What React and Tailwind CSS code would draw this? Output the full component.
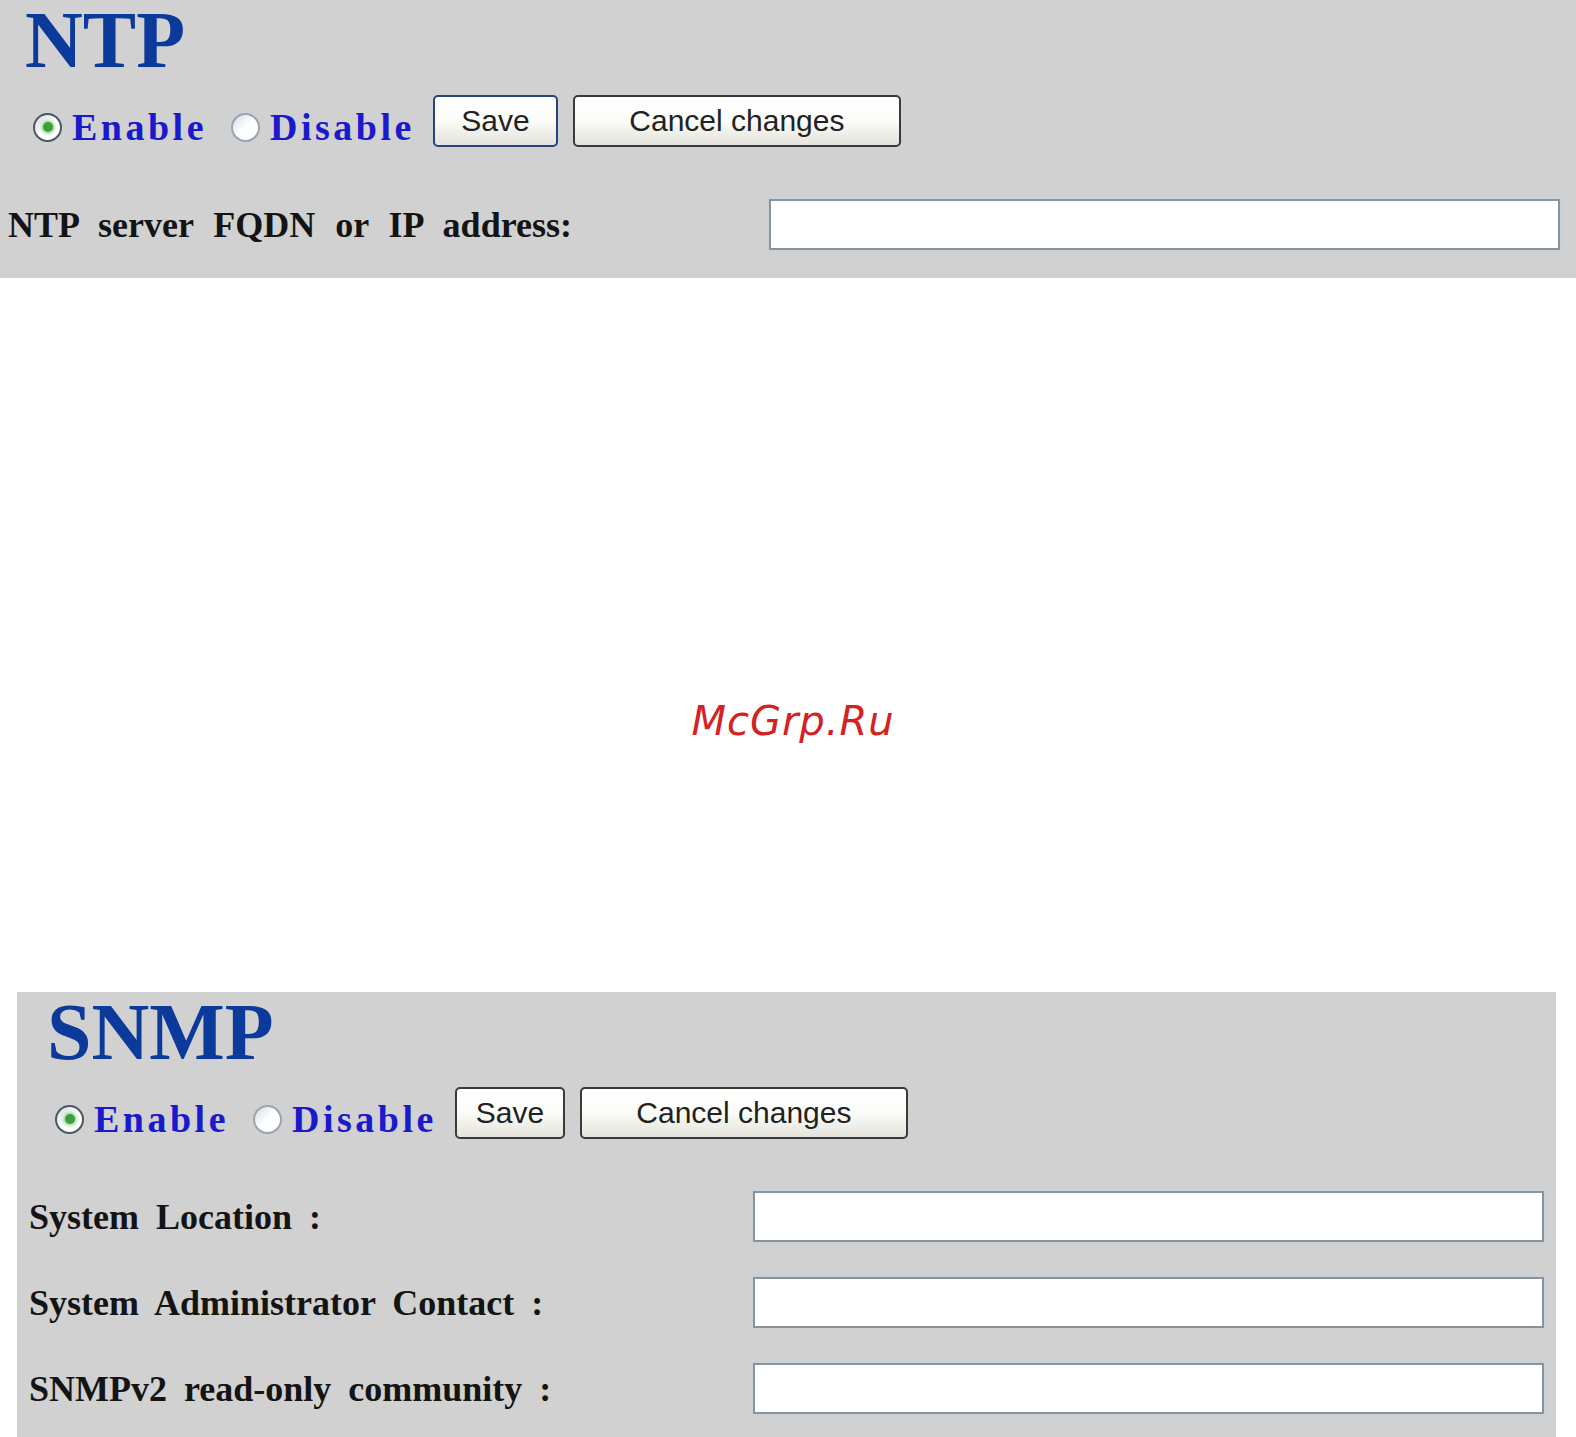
import React, { useState } from "react";

const serif = { fontFamily: '"Liberation Serif", "Times New Roman", serif' };
const sans = { fontFamily: '"Liberation Sans", Arial, sans-serif' };

function Radio({ checked, label, onClick }) {
  return (
    <label onClick={onClick} className="flex items-center cursor-pointer">
      <span
        className={`flex items-center justify-center w-[29px] h-[29px] rounded-full border-2 bg-gradient-to-br from-[#d6dbe0] via-white to-white ${
          checked ? "border-[#4a5866]" : "border-[#98a4b0]"
        }`}
      >
        {checked && (
          <span className="w-[10px] h-[10px] rounded-full bg-[#3c9e3c] shadow-[0_0_3px_2px_#a6dca0]" />
        )}
      </span>
      <span
        style={serif}
        className="ml-[10px] text-[38px] leading-none font-bold tracking-[3.5px] text-[#1a1acc]"
      >
        {label}
      </span>
    </label>
  );
}

function Button({ children, width, primary }) {
  return (
    <button
      style={sans}
      className={`h-[52px] ${width} rounded-[5px] border-2 bg-gradient-to-b from-white via-[#fbfbf8] to-[#e4e4dc] text-[30px] leading-none text-[#222] ${
        primary ? "border-[#23457c]" : "border-[#3a3a3a]"
      }`}
    >
      {children}
    </button>
  );
}

function Field({ label, labelWidth, spacing }) {
  return (
    <div className="flex items-center h-[51px]">
      <div
        style={{ ...serif, wordSpacing: spacing }}
        className={`${labelWidth} shrink-0 text-[36px] leading-none font-bold text-[#141414]`}
      >
        {label}
      </div>
      <input
        type="text"
        className="w-[791px] h-[51px] bg-white border-2 border-[#8a929b] shadow-[0_0_0_2px_#c8d0d8] outline-none px-2"
      />
    </div>
  );
}

function Panel({ title, save, fields, labelWidth, titleLeft, rowLeft, labelLeft, spacing }) {
  const [on, setOn] = useState(true);
  return (
    <div className="bg-[#d1d1d1] pb-[28px]">
      <h1
        style={serif}
        className={`${titleLeft} text-[80px] leading-none font-bold text-[#0b3a9b]`}
      >
        {title}
      </h1>
      <div className={`flex items-end mt-[15px] ${rowLeft}`}>
        <div className="flex items-center gap-[24px] mb-px">
          <Radio checked={on} label="Enable" onClick={() => setOn(true)} />
          <Radio checked={!on} label="Disable" onClick={() => setOn(false)} />
        </div>
        <div className="flex gap-[15px] ml-[18px]">
          <Button width={save.width} primary={save.primary}>
            Save
          </Button>
          <Button width="w-[328px]">Cancel changes</Button>
        </div>
      </div>
      <div className={`flex flex-col gap-[35px] mt-[52px] ${labelLeft}`}>
        {fields.map((f) => (
          <Field key={f} label={f} labelWidth={labelWidth} spacing={spacing} />
        ))}
      </div>
    </div>
  );
}

export default function App() {
  return (
    <div className="w-[1576px] h-[1437px] bg-white overflow-hidden">
      <Panel
        title="NTP"
        save={{ width: "w-[125px]", primary: true }}
        fields={["NTP server FQDN or IP address:"]}
        labelWidth="w-[761px]"
        titleLeft="pl-[25px]"
        rowLeft="pl-[33px]"
        labelLeft="pl-[8px]"
        spacing="11px"
      />
      <div className="h-[714px] pt-[423px] pl-[10px] text-center">
        <span
          style={{ fontFamily: '"DejaVu Sans", sans-serif' }}
          className="text-[40px] leading-none italic text-[#d42222] tracking-[1px]"
        >
          McGrp.Ru
        </span>
      </div>
      <div className="ml-[17px] w-[1539px]">
        <Panel
          title="SNMP"
          save={{ width: "w-[110px]", primary: false }}
          fields={[
            "System Location :",
            "System Administrator Contact :",
            "SNMPv2 read-only community :",
          ]}
          labelWidth="w-[724px]"
          titleLeft="pl-[30px]"
          rowLeft="pl-[38px]"
          labelLeft="pl-[12px]"
          spacing="8px"
        />
      </div>
    </div>
  );
}
